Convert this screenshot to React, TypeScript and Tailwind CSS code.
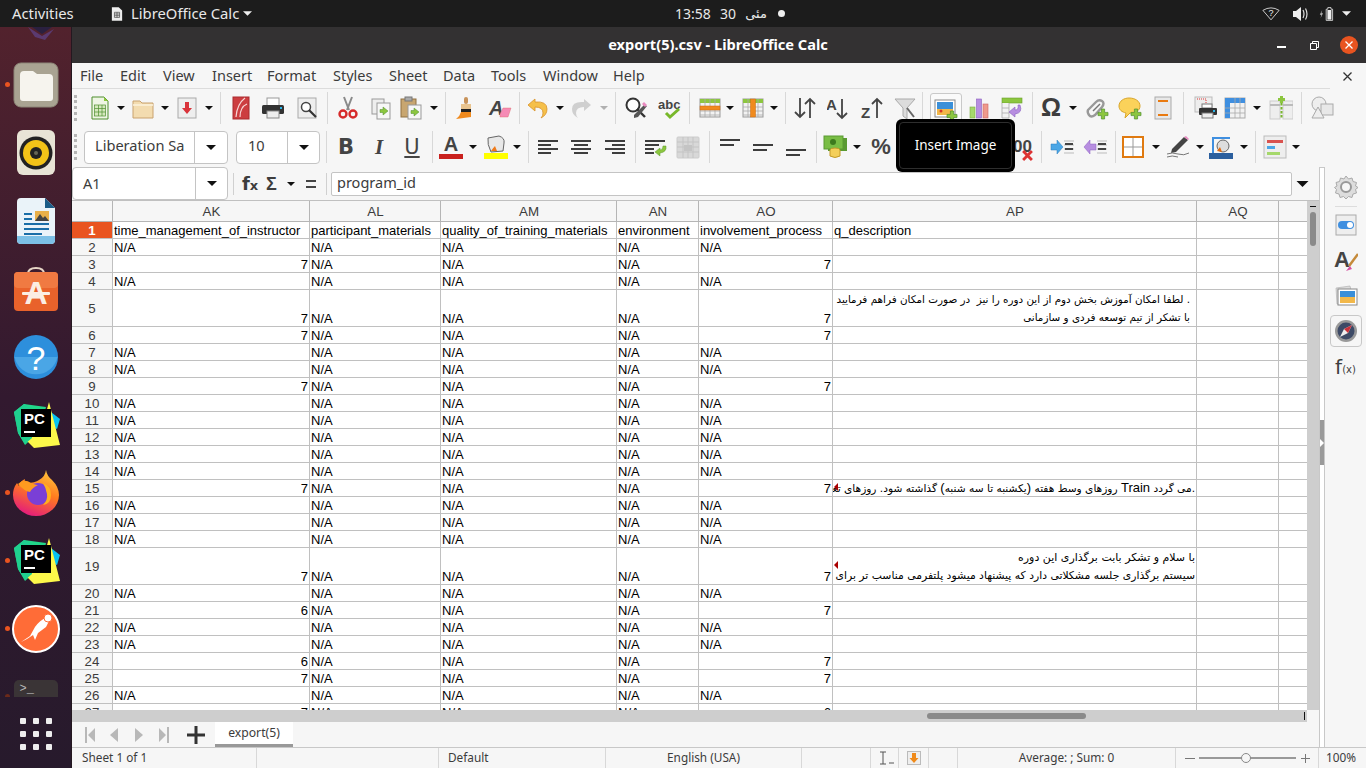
import type { ReactNode } from 'react';

const uiFont = "font-['Noto_Sans','Lato',sans-serif]";
const cellFont = "font-['Liberation_Sans',Arial,sans-serif]";

function G({ children, c = '' }: { children: ReactNode; c?: string }) {
  return (
    <svg viewBox="0 0 24 24" className={`w-6 h-6 shrink-0 block ${c}`}>
      {children}
    </svg>
  );
}

function Dd({ c = '', off = false }: { c?: string; off?: boolean }) {
  return (
    <svg viewBox="0 0 8 4" className={`w-2 h-1 shrink-0 block ${c}`}>
      <path d="M0 0h8L4 4z" fill={off ? '#b0b0b0' : '#111'} />
    </svg>
  );
}

function Sep({ c = '' }: { c?: string }) {
  return <div className={`w-px h-8 shrink-0 bg-[#d8d8d8] ${c}`} />;
}

function Grip() {
  return <div className="ml-[2px] w-[3px] h-[26px] shrink-0 border-l-[3px] border-dotted border-[#b5b5b5]" />;
}

const Plus = ({ x = 18, y = 18 }: { x?: number; y?: number }) => (
  <path d={`M${x - 1.6} ${y - 5}h3.2v3.4h3.4v3.2h-3.4v3.4h-3.2v-3.4h-3.4v-3.2h3.4z`} fill="#8cc63f" stroke="#4f8f2f" strokeWidth="0.7" />
);

const Table = ({ head = '#8cc63f' }: { head?: string }) => (
  <>
    <rect x="2" y="3" width="20" height="18" fill="#f2f2f2" stroke="#999" />
    <rect x="2" y="3" width="20" height="4" fill={head} />
    <path d="M2 11h20M2 15h20M2 19h20M7 3v18M12 3v18M17 3v18" stroke="#aaa" strokeWidth="0.8" fill="none" />
  </>
);

const HLines = ({ a = 3, rows }: { a?: number; rows: [number, number][] }) => (
  <>
    {rows.map(([x, w], i) => (
      <rect key={i} x={x} y={a + i * 4} width={w} height="2" fill="#3d3d3d" />
    ))}
  </>
);

function TopBar() {
  return (
    <div className={`h-[27px] shrink-0 bg-[#1c1c1c] flex items-center text-[#e8e8e8] text-[14.8px] ${uiFont}`}>
      <span className="ml-[12px] w-[99px] pb-[1px]">Activities</span>
      <svg viewBox="0 0 14 16" className="w-3 h-[14px] shrink-0">
        <path d="M1 0h8l4 4v12H1z" fill="#eee" />
        <path d="M4 6h6v6H4zM4 8h6M4 10h6M7 6v6" stroke="#444" strokeWidth="0.8" fill="none" />
      </svg>
      <span className="ml-[8px] w-[112px] whitespace-nowrap pb-[1px]">LibreOffice Calc</span>
      <Dd c="w-[9px] h-[5px] invert" />
      <div className="ml-[423px] w-[36px] text-[14px]">13:58</div>
      <span className="ml-[7px] w-[20px] text-center text-[14px]">30</span>
      <span className="ml-[7px] w-[22px] font-['DejaVu_Sans',sans-serif] text-[13px]" dir="rtl">مئی</span>
      <div className="ml-[11px] w-[7px] h-[7px] rounded-full bg-[#eee]" />
      <svg viewBox="0 0 20 16" className="ml-[477px] w-[18px] h-[15px] shrink-0">
        <path d="M1 4.500Q10-1 19 4.500L10 15z" fill="none" stroke="#ddd" strokeWidth="1" />
        <text x="10" y="11" fontSize="10" fill="#eee" textAnchor="middle" fontFamily="Liberation Sans">?</text>
      </svg>
      <svg viewBox="0 0 16 16" className="ml-[12px] w-[16px] h-[16px] shrink-0">
        <path d="M1 5h3l5-4v14l-5-4H1z" fill="#eee" />
        <path d="M11 4q2 4 0 8M13.500 2.500q3 5.500 0 11" stroke="#ddd" strokeWidth="1.200" fill="none" />
      </svg>
      <svg viewBox="0 0 20 16" className="ml-[11px] w-[16px] h-[16px] shrink-0">
        <path d="M4 3L1 9h2l-1 4 3-6H3z" fill="#bbb" />
        <path d="M9 2h2V0h4v2h2v14H9z" fill="none" stroke="#eee" strokeWidth="1" />
        <rect x="10.500" y="3" width="5" height="12" fill="#eee" />
      </svg>
      <Dd c="ml-[7px] w-[9px] h-[5px] invert" />
    </div>
  );
}

function DockSlot({ children, dot = false }: { children: ReactNode; dot?: boolean }) {
  return (
    <div className="relative h-[68px] w-full shrink-0 flex items-center justify-center">
      {dot && <div className="absolute left-[5px] top-[31px] w-[5px] h-[5px] rounded-full bg-[#e95420]" />}
      {children}
    </div>
  );
}

function PyCharm() {
  return (
    <svg viewBox="0 0 48 48" className="w-12 h-12 ml-[2px]">
      <path d="M34 8l13 10-3 10-10-4z" fill="#07c3f2" />
      <path d="M1 11L11 3l22 3-6 24-15 14-7-12z" fill="#21d789" />
      <path d="M36 1l11 43-26 3-8-8 18-20z" fill="#fcf84a" />
      <path d="M1 11L11 3l8 4v30l-7 6-7-11z" fill="#1fd08f" />
      <rect x="8" y="8" width="30" height="28" fill="#000" />
      <text x="11" y="23" fontSize="15" fontWeight="700" fill="#fff" fontFamily="Liberation Sans">PC</text>
      <rect x="11" y="30" width="11" height="2" fill="#fff" />
    </svg>
  );
}

function Dock() {
  return (
    <div className="w-[72px] shrink-0 flex flex-col bg-gradient-to-b from-[#52222d] via-[#32192f] to-[#271a2c] border-r border-[#241820]">
      <div className="h-[24px] shrink-0 overflow-hidden flex justify-center">
        <svg viewBox="0 0 44 14" className="w-[44px] h-[14px]">
          <path d="M14 0l14 9L40 2l-9 11-10-3z" fill="#5b3a70" />
          <path d="M18 0h20L28 7z" fill="#2a2040" />
        </svg>
      </div>
      <DockSlot dot>
        <svg viewBox="0 0 46 46" className="w-[46px] h-[46px]">
          <rect x="1" y="1" width="44" height="44" rx="7" fill="#a9a392" stroke="#8d8778" />
          <path d="M7 13q0-4 4-4h9l4 3h12q4 0 4 4v20q0 3-3 3H10q-3 0-3-3z" fill="#f6f4ee" />
        </svg>
      </DockSlot>
      <DockSlot>
        <svg viewBox="0 0 38 46" className="w-[38px] h-[46px]">
          <rect x="0" y="0" width="38" height="45" rx="6" fill="#e8e4d6" />
          <circle cx="19" cy="23" r="16.500" fill="#222" />
          <circle cx="19" cy="23" r="13" fill="#f2c318" />
          <circle cx="19" cy="23" r="6" fill="#222" />
          <circle cx="19" cy="23" r="2" fill="#665" />
        </svg>
      </DockSlot>
      <DockSlot>
        <svg viewBox="0 0 38 46" className="w-[38px] h-[46px]">
          <path d="M4 0h24l10 10v32q0 4-4 4H4q-4 0-4-4V4q0-4 4-4z" fill="#eaf3f9" />
          <path d="M0 38h38v4q0 4-4 4H4q-4 0-4-4z" fill="#7cc0e6" />
          <path d="M28 0l10 10h-10z" fill="#1a5c88" />
          <path d="M7 15h8v2H7zM7 20h8v2H7zM7 25h25v2H7zM7 30h25v2H7zM7 35h18v2H7z" fill="#1a6ea8" />
          <rect x="18" y="13" width="14" height="10" fill="#e8b04a" />
          <path d="M18 23l5-7 3 4 2-2 4 5z" fill="#444" />
        </svg>
      </DockSlot>
      <DockSlot>
        <svg viewBox="0 0 46 46" className="w-[46px] h-[46px]">
          <path d="M15 8q0-6 8-6t8 6" fill="none" stroke="#e6d6c6" strokeWidth="2" />
          <rect x="1" y="6" width="44" height="39" rx="4" fill="#e9622b" />
          <rect x="1" y="6" width="44" height="16" rx="4" fill="#f07a42" />
          <text x="23" y="38" fontSize="32" fontWeight="700" fill="#fbeee4" textAnchor="middle" fontFamily="Liberation Sans">A</text>
          <rect x="9" y="26" width="28" height="3" rx="1" fill="#fbeee4" />
        </svg>
      </DockSlot>
      <DockSlot>
        <svg viewBox="0 0 46 46" className="w-[46px] h-[46px]">
          <circle cx="23" cy="23" r="22" fill="#2d8fdc" />
          <path d="M1.500 23h43a22 22 0 0 1-43 0z" fill="#4aa6e6" />
          <text x="23" y="36" fontSize="34" fill="#fff" textAnchor="middle" fontFamily="Liberation Sans">?</text>
        </svg>
      </DockSlot>
      <DockSlot><PyCharm /></DockSlot>
      <DockSlot dot>
        <svg viewBox="0 0 46 46" className="w-[46px] h-[46px]">
          <defs>
            <linearGradient id="ff" x1="0.7" y1="0" x2="0.3" y2="1">
              <stop offset="0" stopColor="#ffc23a" />
              <stop offset="0.45" stopColor="#ff7a1f" />
              <stop offset="1" stopColor="#e3187f" />
            </linearGradient>
          </defs>
          <path d="M33 0q1 6 6 10 7 7 7 15a23 21 0 0 1-46 0q0-7 4-12l2 3q1-5 6-7-1 3 2 4 8 0 12-3 6-3 7-10z" fill="url(#ff)" />
          <circle cx="25" cy="24" r="11" fill="#7a3fd6" />
          <path d="M5 14q6-6 13-1 5 2 7 2-6 3-8 7-6-1-12-8z" fill="#ff9a1f" />
          <path d="M30 13q8 3 8 12t-8 10q5-5 4-11t-4-11z" fill="#ffb01f" />
        </svg>
      </DockSlot>
      <DockSlot dot><PyCharm /></DockSlot>
      <DockSlot dot>
        <svg viewBox="0 0 48 48" className="w-12 h-12">
          <circle cx="24" cy="24" r="23" fill="#ff6c37" stroke="#fff" strokeWidth="2" />
          <path d="M9 37l9-6 5-9q5-7 11-9l3 3-3 6-8 6-3 7-2-5-6 4z" fill="#fff" />
          <circle cx="36" cy="13" r="4" fill="#fff" stroke="#ff6c37" />
        </svg>
      </DockSlot>
      <div className="relative h-[34px] shrink-0 overflow-hidden flex justify-center items-start">
        <div className="mt-[17px] w-[44px] h-[44px] rounded-[5px] bg-[#3a3436] text-[#b8b8b8] text-[12px] pl-[6px] font-['Liberation_Mono',monospace]">&gt;_</div>
        <div className="absolute left-[5px] top-[31px] w-[5px] h-[5px] rounded-full bg-[#6b2a1a]" />
      </div>
      <div className="mt-[21px] grid grid-cols-3 gap-[7px] w-[32px] mx-auto">
        {Array.from({ length: 9 }).map((_, i) => (
          <div key={i} className="w-[6px] h-[6px] rounded-[1px] bg-[#eee]" />
        ))}
      </div>
    </div>
  );
}

function TitleBar() {
  return (
    <div className={`relative h-[36px] shrink-0 bg-[#333132] flex items-center justify-center text-white text-[14.6px] font-bold ${uiFont}`}>
      <span className="mr-[2px] pb-[1px]">export(5).csv - LibreOffice Calc</span>
      <div className="absolute right-[8px] top-0 h-full flex items-center">
        <div className="w-[9px] h-[2px] bg-white mt-[3px]" />
        <svg viewBox="0 0 9 9" className="ml-[24px] w-[9px] h-[9px]">
          <path d="M0.500 2.500h6v6h-6zM2.500 2V0.500h6v6H7" fill="none" stroke="#fff" />
        </svg>
        <div className="ml-[21px] w-[18px] h-[18px] rounded-full bg-[#e95420] flex items-center justify-center">
          <svg viewBox="0 0 8 8" className="w-2 h-2">
            <path d="M0.500 0.500l7 7M7.500 0.500l-7 7" stroke="#fff" strokeWidth="1.300" />
          </svg>
        </div>
      </div>
    </div>
  );
}

function MenuBar() {
  return (
    <div className={`relative h-[25px] shrink-0 bg-[#f6f6f6] flex items-center pl-2 text-[#3c3c3c] text-[14.5px] ${uiFont}`}>
      <span className="w-[40px]">File</span>
      <span className="w-[43px]">Edit</span>
      <span className="w-[49px]">View</span>
      <span className="w-[55px]">Insert</span>
      <span className="w-[66px]">Format</span>
      <span className="w-[56px]">Styles</span>
      <span className="w-[54px]">Sheet</span>
      <span className="w-[48px]">Data</span>
      <span className="w-[52px]">Tools</span>
      <span className="w-[70px]">Window</span>
      <span>Help</span>
      <svg viewBox="0 0 9 9" className="absolute right-[14px] top-[9px] w-[9px] h-[9px]">
        <path d="M0.500 0.500l8 8M8.500 0.500l-8 8" stroke="#333" strokeWidth="1.300" />
      </svg>
    </div>
  );
}

function Toolbar1() {
  return (
    <div className="h-[39px] shrink-0 bg-[#f6f6f6] flex items-center">
      <Grip />
      <G c="ml-[11px]">
        <path d="M4 1h12l4 4v18H4z" fill="#eef5e4" stroke="#4f8f2f" />
        <path d="M16 1v4h4z" fill="#8cc63f" />
        <rect x="6.500" y="9" width="11" height="11" fill="#d5e8bd" stroke="#4f8f2f" strokeWidth="0.7" />
        <path d="M6.500 12.500h11M6.500 16h11M10.500 9v11M14 9v11" stroke="#4f8f2f" strokeWidth="0.7" />
      </G>
      <Dd c="ml-[5px]" />
      <G c="ml-[6px]">
        <path d="M2 5h7l2 2h11v15H2z" fill="#f3dcb0" stroke="#c9a26f" />
        <path d="M2 9h20" stroke="#fdf3dc" strokeWidth="1.500" />
      </G>
      <Dd c="ml-[6px]" />
      <G c="ml-[6px]">
        <rect x="3" y="2" width="18" height="20" fill="#eee" stroke="#aaa" />
        <path d="M10 6h4v6h3l-5 6-5-6h3z" fill="#d9333a" />
      </G>
      <Dd c="ml-[6px]" />
      <Sep c="ml-[7px]" />
      <G c="ml-[8px]">
        <rect x="4" y="1" width="16" height="22" fill="#cc3d40" stroke="#aa2a2e" />
        <path d="M16 2Q8 8 7 21M18 8Q11 11 11 21" stroke="#f7d6d6" strokeWidth="1.200" fill="none" />
      </G>
      <G c="ml-[8px]">
        <rect x="6" y="2" width="12" height="8" fill="#fff" stroke="#999" />
        <rect x="1" y="9" width="22" height="9" rx="1.500" fill="#333" />
        <rect x="19" y="11" width="2" height="2" fill="#2ab4e8" />
        <rect x="6" y="15" width="12" height="7" fill="#eee" stroke="#888" />
      </G>
      <G c="ml-[10px]">
        <rect x="3" y="2" width="18" height="20" fill="#eee" stroke="#aaa" />
        <circle cx="11" cy="11" r="4.500" fill="#fff" stroke="#444" strokeWidth="1.500" />
        <path d="M14 14l7 7" stroke="#333" strokeWidth="2.200" />
      </G>
      <Sep c="ml-[8px]" />
      <G c="ml-[8px]">
        <path d="M8 1l5 13M16 1l-5 13" stroke="#8a8a8a" strokeWidth="2" />
        <circle cx="7" cy="18" r="3.500" fill="none" stroke="#d62a2a" strokeWidth="2.400" />
        <circle cx="17" cy="18" r="3.500" fill="none" stroke="#d62a2a" strokeWidth="2.400" />
      </G>
      <G c="ml-[9px]">
        <rect x="3" y="3" width="12" height="15" fill="#eee" stroke="#999" />
        <rect x="8" y="7" width="13" height="16" fill="#f7f7f7" stroke="#999" />
        <path d="M19 15l-5-4v2.500h-3v3h3V19z" fill="#8cc63f" stroke="#4f8f2f" strokeWidth="0.500" />
      </G>
      <G c="ml-[6px]">
        <rect x="2" y="3" width="15" height="18" fill="#c8a670" stroke="#8f7143" />
        <rect x="6" y="1" width="7" height="4" fill="#aaa" stroke="#777" />
        <rect x="9" y="9" width="13" height="14" fill="#f7f7f7" stroke="#999" />
        <path d="M20 16l-5-4v2.500h-3v3h3V20z" fill="#8cc63f" stroke="#4f8f2f" strokeWidth="0.500" />
      </G>
      <Dd c="ml-[7px]" />
      <Sep c="ml-[7px]" />
      <G c="ml-[8px]">
        <rect x="10" y="1" width="4" height="7" rx="2" fill="#c8935a" />
        <rect x="7" y="8" width="10" height="6" fill="#e9c48f" />
        <rect x="7" y="13" width="10" height="3" fill="#222" />
        <path d="M7 16h10v5l-15 2q4-3 5-7z" fill="#f08a1d" />
      </G>
      <G c="ml-[10px]">
        <text x="1" y="19" fontSize="20" fontWeight="700" fontStyle="italic" fill="#444" fontFamily="Liberation Sans">A</text>
        <path d="M12 18l3-6h8l-3 9h-8z" fill="#f58bb5" stroke="#d66" strokeWidth="0.400" />
      </G>
      <Sep c="ml-[7px]" />
      <G c="ml-[5px]">
        <path d="M10 3L3 9l7 6v-4q8 0 8 6 0 3-2 5 6-3 6-9 0-8-12-7z" fill="#f5c04a" stroke="#d8922a" strokeWidth="0.800" />
      </G>
      <Dd c="ml-[7px]" />
      <G c="ml-[6px]">
        <path d="M14 3l7 6-7 6v-4q-8 0-8 6 0 3 2 5-6-3-6-9 0-8 12-7z" fill="#cfcfcf" />
      </G>
      <Dd c="ml-[6px]" off />
      <Sep c="ml-[7px]" />
      <G c="ml-[8px]">
        <circle cx="9" cy="9" r="6.500" fill="#fff" stroke="#333" strokeWidth="2" />
        <path d="M13 13l8 8" stroke="#333" strokeWidth="2.400" />
        <path d="M10 19l10-10 3 1-9 11-4 1z" fill="#555" />
        <path d="M20 6l3 3-2 2-3-3z" fill="#e98ac0" />
      </G>
      <G c="ml-[10px]">
        <text x="0" y="13" fontSize="13" fontWeight="700" fill="#444" fontFamily="Liberation Sans">abc</text>
        <path d="M8 17l4 4 9-8" stroke="#78b82a" strokeWidth="3" fill="none" />
      </G>
      <Sep c="ml-[7px]" />
      <G c="ml-[8px]">
        <Table />
        <rect x="2" y="10" width="20" height="4" fill="#f08a1d" stroke="#c96a10" strokeWidth="0.500" />
      </G>
      <Dd c="ml-[4px]" />
      <G c="ml-[7px]">
        <Table />
        <rect x="9.500" y="3" width="5" height="18" fill="#f08a1d" stroke="#c96a10" strokeWidth="0.500" />
      </G>
      <Dd c="ml-[5px]" />
      <Sep c="ml-[7px]" />
      <G c="ml-[7px]">
        <path d="M7 2v19M2 16l5 5 5-5M17 22V3M12 8l5-5 5 5" stroke="#444" strokeWidth="1.800" fill="none" />
      </G>
      <G c="ml-[10px]">
        <text x="-1" y="14" fontSize="15" fontWeight="700" fill="#444" fontFamily="Liberation Sans">A</text>
        <path d="M15 3v19M10 17l5 5 5-5" stroke="#444" strokeWidth="1.800" fill="none" />
      </G>
      <G c="ml-[10px]">
        <text x="0" y="22" fontSize="15" fontWeight="700" fill="#444" fontFamily="Liberation Sans">Z</text>
        <path d="M16 22V3M11 8l5-5 5 5" stroke="#444" strokeWidth="1.800" fill="none" />
      </G>
      <G c="ml-[8px]">
        <path d="M2 3h20l-8 9v11l-4-3v-8z" fill="#dcdcdc" stroke="#aaa" />
        <path d="M14 12l7 9" stroke="#666" strokeWidth="2" />
      </G>
      <Sep c="ml-[5px]" />
      <div className="ml-[7px] w-[32px] h-[33px] shrink-0 mt-[3px] rounded-[3px] border border-[#c9c9c9] bg-[#fafafa] flex items-start justify-center pt-[3px]">
        <G>
          <rect x="1" y="3" width="20" height="17" fill="#fff" stroke="#888" />
          <rect x="3" y="5" width="16" height="7" fill="#3a8fd8" />
          <rect x="3" y="12" width="16" height="6" fill="#f2b84a" />
          <circle cx="7" cy="14" r="1.500" fill="#d8362a" />
          <Plus x={18} y={19} />
        </G>
      </div>
      <G c="ml-[5px]">
        <rect x="3" y="11" width="5" height="11" fill="#a5d86b" stroke="#7cae3f" strokeWidth="0.600" />
        <rect x="9.500" y="3" width="5" height="19" fill="#b78ee0" stroke="#8a5fc0" strokeWidth="0.600" />
        <rect x="16" y="8" width="5" height="14" fill="#ee9a8c" stroke="#c66" strokeWidth="0.600" />
      </G>
      <G c="ml-[9px]">
        <rect x="2" y="2" width="20" height="5" fill="#8cc63f" stroke="#6a9f2b" strokeWidth="0.600" />
        <path d="M2 7v15h7V7M2 12h7M2 17h7" stroke="#aaa" fill="#f2f2f2" strokeWidth="0.800" />
        <path d="M20 9q3 8-5 9v3l-6-5 6-5v3q4 0 3-5z" fill="#b78ee0" stroke="#8a5fc0" strokeWidth="0.600" />
      </G>
      <Sep c="ml-[8px]" />
      <div className="ml-[6px] w-6 h-6 shrink-0 flex items-center justify-center text-[25px] leading-none font-bold text-[#3d3d3d] font-['Liberation_Sans',sans-serif]">Ω</div>
      <Dd c="ml-[6px]" />
      <G c="ml-[8px]">
        <path d="M3 14l8-8q3-3 6-1t0 6l-7 8q-4 3-6 0t-1-5z" fill="none" stroke="#999" strokeWidth="2.400" />
        <path d="M8 15l7-7" stroke="#777" strokeWidth="1.500" />
        <Plus x={18} y={18} />
      </G>
      <G c="ml-[9px]">
        <path d="M11 2c6 0 11 3 11 8s-5 7-10 7l-5 5 1-5c-4-1-7-3-7-7 0-5 5-8 10-8z" fill="#fbd25a" stroke="#d8a52a" />
        <Plus x={18} y={18} />
      </G>
      <G c="ml-[9px]">
        <rect x="4" y="1" width="16" height="22" fill="#e8e8e8" stroke="#aaa" />
        <path d="M7 5h10M7 19h10" stroke="#e97a10" strokeWidth="1.800" />
      </G>
      <Sep c="ml-[8px]" />
      <G c="ml-[10px]">
        <rect x="1" y="1" width="17" height="15" fill="#eee" stroke="#bbb" />
        <path d="M3 3h9v9" stroke="#d33" strokeDasharray="1 1" fill="none" />
        <rect x="8" y="8" width="10" height="4" fill="#fff" stroke="#777" />
        <rect x="5" y="12" width="18" height="7" rx="1" fill="#333" />
        <rect x="19" y="14" width="2" height="2" fill="#2ab4e8" />
        <rect x="8" y="17" width="11" height="5" fill="#eee" stroke="#777" />
      </G>
      <G c="ml-[5px]">
        <rect x="2" y="2" width="20" height="20" fill="#f2f2f2" stroke="#aaa" />
        <rect x="2" y="2" width="20" height="5" fill="#3f8fe0" />
        <rect x="2" y="2" width="5" height="20" fill="#3f8fe0" />
        <path d="M2 12h20M2 17h20M12 2v20M17 2v20" stroke="#aaa" strokeWidth="0.800" />
      </G>
      <Dd c="ml-[6px]" />
      <G c="ml-[8px]">
        <rect x="1" y="5" width="10" height="18" fill="#eee" stroke="#ccc" />
        <rect x="14" y="5" width="10" height="18" fill="#eee" stroke="#ccc" />
        <path d="M1 9h10M14 9h10" stroke="#bbb" strokeWidth="2" />
        <path d="M12.500 7v16" stroke="#79b52e" strokeWidth="2" strokeDasharray="2.500 1.500" />
        <path d="M11 0h3v2h2v3h-2v2h-3V5H9V2h2z" fill="#8cc63f" />
      </G>
      <Sep c="ml-[8px]" />
      <G c="ml-[8px]">
        <circle cx="9" cy="8" r="7" fill="#eee" stroke="#aaa" />
        <rect x="11" y="8" width="12" height="11" fill="#e8e8e8" stroke="#aaa" />
        <path d="M8 11l6 11H2z" fill="#eee" stroke="#aaa" />
      </G>
    </div>
  );
}

function Toolbar2() {
  return (
    <div className="h-[40px] shrink-0 bg-[#f6f6f6] flex items-center">
      <Grip />
      <div className={`ml-[7px] w-[144px] h-[33px] shrink-0 rounded-[4px] border border-[#c4c4c4] bg-white flex items-center ${uiFont}`}>
        <span className="pl-[10px] w-[109px] pb-[2px] text-[14.6px] text-[#3c3c3c] overflow-hidden whitespace-nowrap">Liberation Sa</span>
        <div className="h-full border-l border-[#c4c4c4] flex-1 flex items-center justify-center">
          <Dd c="w-[10px] h-[5px]" />
        </div>
      </div>
      <div className={`ml-[8px] w-[84px] h-[33px] shrink-0 rounded-[4px] border border-[#c4c4c4] bg-white flex items-center ${uiFont}`}>
        <span className="pl-[11px] w-[50px] pb-[2px] text-[14.6px] text-[#3c3c3c]">10</span>
        <div className="h-full border-l border-[#c4c4c4] flex-1 flex items-center justify-center">
          <Dd c="w-[10px] h-[5px]" />
        </div>
      </div>
      <Sep c="ml-[6px]" />
      <div className="ml-[7px] w-6 text-center text-[21px] font-bold text-[#444] font-['DejaVu_Sans',sans-serif] leading-none">B</div>
      <div className="ml-[9px] w-6 text-center text-[21px] italic font-bold text-[#444] font-['Liberation_Serif',serif] leading-none">I</div>
      <div className="ml-[9px] w-6 text-center text-[21px] text-[#444] font-['DejaVu_Sans',sans-serif] leading-none underline underline-offset-2 decoration-2">U</div>
      <Sep c="ml-[8px]" />
      <div className="ml-[6px] w-6 h-6 shrink-0 flex flex-col items-center">
        <span className="text-[20px] font-bold leading-[18px] text-[#444] font-['Liberation_Sans',sans-serif]">A</span>
        <div className="w-[24px] h-[6px] mt-[1px] bg-[#c9211e]" />
      </div>
      <Dd c="ml-[6px]" />
      <G c="ml-[7px]">
        <path d="M4 3l11-2q6 2 5 7l-1 8-12 1q-4-8-3-14z" fill="#e8e8e8" stroke="#666" />
        <path d="M7 16q2-3 4-5l2 5z" fill="#ef7a1a" />
        <rect x="0" y="18" width="24" height="6" fill="#ffff00" />
      </G>
      <Dd c="ml-[5px]" />
      <Sep c="ml-[7px]" />
      <G c="ml-[7px]"><HLines a={5} rows={[[2, 20], [2, 13], [2, 20], [2, 13]]} /></G>
      <G c="ml-[9px]"><HLines a={5} rows={[[2, 20], [5, 14], [2, 20], [5, 14]]} /></G>
      <G c="ml-[10px]"><HLines a={5} rows={[[2, 20], [9, 13], [2, 20], [9, 13]]} /></G>
      <Sep c="ml-[8px]" />
      <G c="ml-[8px]">
        <HLines a={5} rows={[[1, 20], [1, 14], [1, 9], [1, 9]]} />
        <path d="M22 11q1 6-6 7v3l-5-4 5-4v2q3 0 3-4z" fill="#8cc63f" stroke="#5b9a2a" strokeWidth="0.500" />
      </G>
      <G c="ml-[8px]">
        <rect x="1" y="2" width="22" height="21" rx="1" fill="#d8d8d8" stroke="#ccc" />
        <path d="M1 7h22M1 12h22M1 17h22M7 2v21M12 2v21M17 2v21" stroke="#c4c4c4" />
        <rect x="8" y="10" width="8" height="6" fill="#c4c4c4" />
      </G>
      <Sep c="ml-[9px]" />
      <G c="ml-[8px]"><rect x="2" y="4" width="20" height="2" fill="#3d3d3d" /><rect x="2" y="9" width="14" height="2" fill="#3d3d3d" /></G>
      <G c="ml-[9px]"><rect x="2" y="9" width="20" height="2" fill="#3d3d3d" /><rect x="2" y="14" width="14" height="2" fill="#3d3d3d" /></G>
      <G c="ml-[9px]"><rect x="2" y="14" width="20" height="2" fill="#3d3d3d" /><rect x="2" y="19" width="14" height="2" fill="#3d3d3d" /></G>
      <Sep c="ml-[8px]" />
      <G c="ml-[6px]">
        <rect x="5" y="3" width="19" height="13" fill="#5a9a32" />
        <rect x="1" y="1" width="19" height="13" fill="#79bd45" stroke="#5a9a32" />
        <circle cx="10" cy="7" r="3" fill="#3d7a1e" />
        <ellipse cx="12" cy="15" rx="5" ry="2" fill="#f4cf5a" stroke="#c29a2a" />
        <path d="M7 15v6q5 3 10 0v-6" fill="#f4cf5a" stroke="#c29a2a" />
      </G>
      <Dd c="ml-[6px]" />
      <div className="ml-[8px] w-6 text-center text-[22px] font-bold text-[#444] font-['Liberation_Sans',sans-serif] leading-none">%</div>
      <div className="relative ml-[115px] w-6 h-6 shrink-0 text-[17px] leading-6 text-[#444] font-bold font-['Liberation_Sans',sans-serif]">
        <span className="absolute right-0 top-0 whitespace-nowrap">0.00</span>
        <svg viewBox="0 0 10 10" className="absolute right-[-1px] bottom-[-2px] w-[11px] h-[11px]">
          <path d="M1 1l8 8M9 1l-8 8" stroke="#d33" strokeWidth="2.600" />
        </svg>
      </div>
      <Sep c="ml-[9px]" />
      <G c="ml-[8px]">
        <path d="M14 6h10M14 10h10M14 14h10M14 18h10" stroke="#bbb" />
        <path d="M15 9h8M15 14h8" stroke="#444" strokeWidth="2" />
        <path d="M1 9h6V5l6 7-6 7v-4H1z" fill="#4aa6e6" stroke="#2a7ab8" strokeWidth="0.500" />
      </G>
      <G c="ml-[9px]">
        <path d="M14 6h10M14 10h10M14 14h10M14 18h10" stroke="#bbb" />
        <path d="M15 9h8M15 14h8" stroke="#444" strokeWidth="2" />
        <path d="M13 9H7V5l-6 7 6 7v-4h6z" fill="#b78ee0" stroke="#8a5fc0" strokeWidth="0.500" />
      </G>
      <Sep c="ml-[8px]" />
      <G c="ml-[5px]">
        <rect x="2" y="2" width="20" height="20" fill="#fff" stroke="#e07a10" strokeWidth="2" />
        <path d="M12 3v18M3 12h18" stroke="#999" />
      </G>
      <Dd c="ml-[7px]" />
      <G c="ml-[6px]">
        <path d="M6 14L18 2l4 3-12 12-5 1z" fill="#444" />
        <path d="M18 2l2-1 3 3-1 1z" fill="#e98ac0" />
        <path d="M1 19q5-2 11 0t11-1M1 22q5-2 11 0" stroke="#777" fill="none" />
      </G>
      <Dd c="ml-[6px]" />
      <G c="ml-[5px]">
        <path d="M3 2h18v2H5v14H3z" fill="#3f8fe0" />
        <circle cx="14" cy="11" r="6" fill="#ddd" stroke="#666" />
        <path d="M8 16l3-4 2 5z" fill="#e06a10" />
        <rect x="0" y="18" width="24" height="6" fill="#2b5f9e" />
      </G>
      <Dd c="ml-[7px]" />
      <Sep c="ml-[7px]" />
      <G c="ml-[7px]">
        <rect x="1" y="1" width="22" height="22" fill="#eee" stroke="#bbb" />
        <rect x="4" y="5" width="16" height="3" fill="#d9534f" />
        <rect x="4" y="11" width="8" height="3" fill="#4aa6e6" />
        <rect x="4" y="17" width="13" height="3" fill="#a5d86b" />
      </G>
      <Dd c="ml-[5px]" />
    </div>
  );
}

function FormulaBar() {
  return (
    <div className={`h-[33px] shrink-0 bg-[#f6f6f6] flex items-center text-[#3c3c3c] text-[14.5px] ${uiFont}`}>
      <div className="w-[156px] h-[33px] shrink-0 rounded-[4px] border border-[#c4c4c4] bg-white flex items-center">
        <span className="pl-[10px] w-[122px]">A1</span>
        <div className="h-full border-l border-[#c4c4c4] flex-1 flex items-center justify-center">
          <Dd c="w-[10px] h-[5px]" />
        </div>
      </div>
      <div className="ml-[5px] w-px h-[22px] bg-[#d0d0d0]" />
      <span className="ml-[8px] w-[20px] text-[18px] leading-none font-bold text-[#3d3d3d] font-['DejaVu_Sans',sans-serif]">f<span className="text-[13px]">x</span></span>
      <span className="ml-[4px] w-[14px] text-[18px] leading-none font-bold text-[#3d3d3d] font-['Liberation_Sans',sans-serif]">Σ</span>
      <Dd c="ml-[7px]" />
      <div className="ml-[11px] w-[10px] h-[8px] border-y-2 border-[#444] shrink-0" />
      <div className="ml-[10px] w-px h-[22px] bg-[#d0d0d0]" />
      <div className="ml-[4px] mt-[1px] w-[961px] h-[24px] shrink-0 border border-[#c4c4c4] rounded-[2px] bg-white flex items-center pl-[5px] pb-[2px]">program_id</div>
      <Dd c="ml-[4px] w-[13px] h-[6px]" />
    </div>
  );
}

type Row = {
  n: number;
  kind: 'na' | 'num' | 'head';
  ak?: string;
  ao?: string;
  tall?: boolean;
  text?: ReactNode[];
  textClass?: string;
  mark?: boolean;
};

const Lat = ({ children }: { children: ReactNode }) => (
  <span className="text-[13px] font-['Liberation_Sans',sans-serif]">{children}</span>
);

const rows: Row[] = [
  { n: 1, kind: 'head' },
  { n: 2, kind: 'na' },
  { n: 3, kind: 'num', ak: '7', ao: '7' },
  { n: 4, kind: 'na' },
  {
    n: 5,
    kind: 'num',
    ak: '7',
    ao: '7',
    tall: true,
    textClass: 'pr-[6px] text-[10.4px]',
    text: ['. لطفا امکان آموزش بخش دوم از این دوره را نیز  در صورت امکان فراهم فرمایید', 'با تشکر از تیم توسعه فردی و سازمانی'],
  },
  { n: 6, kind: 'num', ak: '7', ao: '7' },
  { n: 7, kind: 'na' },
  { n: 8, kind: 'na' },
  { n: 9, kind: 'num', ak: '7', ao: '7' },
  { n: 10, kind: 'na' },
  { n: 11, kind: 'na' },
  { n: 12, kind: 'na' },
  { n: 13, kind: 'na' },
  { n: 14, kind: 'na' },
  {
    n: 15,
    kind: 'num',
    ak: '7',
    ao: '7',
    mark: true,
    textClass: 'pr-[1px] text-[10.6px]',
    text: [
      <>.می گردد <Lat>Train</Lat> روزهای وسط هفته <Lat>(</Lat>یکشنبه تا سه شنبه<Lat>)</Lat> گذاشته شود. روزهای تعطیل</>,
    ],
  },
  { n: 16, kind: 'na' },
  { n: 17, kind: 'na' },
  { n: 18, kind: 'na' },
  {
    n: 19,
    kind: 'num',
    ak: '7',
    ao: '7',
    tall: true,
    mark: true,
    textClass: 'pr-[1px] pt-[2px] text-[11px]',
    text: ['با سلام و تشکر بابت برگذاری این دوره', <span className="text-[10.8px]">سیستم برگذاری جلسه مشکلاتی دارد که پیشنهاد میشود پلتفرمی مناسب تر برای</span>],
  },
  { n: 20, kind: 'na' },
  { n: 21, kind: 'num', ak: '6', ao: '7' },
  { n: 22, kind: 'na' },
  { n: 23, kind: 'na' },
  { n: 24, kind: 'num', ak: '6', ao: '7' },
  { n: 25, kind: 'num', ak: '7', ao: '7' },
  { n: 26, kind: 'na' },
  { n: 27, kind: 'num', ak: '7', ao: '6' },
];

const line = 'border-r border-b border-[#c0c0c0]';
const cell = `${line} shrink-0 h-full flex items-end px-[1px] leading-[14px] overflow-hidden whitespace-nowrap`;

function SheetRow({ r }: { r: Row }) {
  const head = r.kind === 'head';
  const isNa = r.kind === 'na';
  return (
    <div className={`flex shrink-0 ${r.tall ? 'h-[37px]' : 'h-[17px]'}`}>
      <div className={`w-[41px] shrink-0 border-r border-b border-[#c0c0c0] flex items-center justify-center leading-none pt-[2px] text-[13.33px] ${head ? 'bg-[#e95420] text-white font-bold' : 'bg-[#f6f6f6] text-[#3c3c3c]'}`}>
        {r.n}
      </div>
      <div className={`${cell} w-[197px] ${r.ak ? 'justify-end' : ''}`}>
        {head ? 'time_management_of_instructor' : isNa ? 'N/A' : r.ak}
      </div>
      <div className={`${cell} w-[131px]`}>{head ? 'participant_materials' : 'N/A'}</div>
      <div className={`${cell} w-[176px]`}>{head ? 'quality_of_training_materials' : 'N/A'}</div>
      <div className={`${cell} w-[82px]`}>{head ? 'environment' : 'N/A'}</div>
      <div className={`${cell} w-[134px] ${r.ao ? 'justify-end' : ''}`}>
        {head ? 'involvement_process' : isNa ? 'N/A' : r.ao}
      </div>
      <div className={`relative ${line} shrink-0 h-full w-[364px] overflow-hidden`}>
        {head && <div className="px-[1px] pt-[2px] leading-[14px]">q_description</div>}
        {r.text && (
          <div className={`flex flex-col h-full justify-center items-start whitespace-pre font-['DejaVu_Sans','Liberation_Sans',sans-serif] ${r.textClass}`} dir="rtl">
            {r.text.map((t, i) => (
              <div key={i} className={r.tall ? 'leading-[18.5px]' : 'leading-[16px]'}>{t}</div>
            ))}
          </div>
        )}
        {r.mark && (
          <div className={`absolute left-[1px] w-0 h-0 border-y-[4px] border-y-transparent border-r-[4px] border-r-[#a00] ${r.tall ? 'top-[13px]' : 'top-[3px]'}`} />
        )}
      </div>
      <div className={`${cell} w-[82px]`} />
      <div className="flex-1 border-b border-[#c0c0c0]" />
    </div>
  );
}

function Sheet() {
  const headCell = 'shrink-0 h-full border-r border-b border-[#b5b5b5] flex items-center justify-center pl-[1px] pt-[1px]';
  return (
    <div className="flex flex-1 min-h-0">
      <div className={`flex-1 min-w-0 flex flex-col overflow-hidden bg-white text-[13px] text-black border-t border-[#c0c0c0] ${cellFont}`}>
        <div className="h-[21px] shrink-0 flex bg-[#f6f6f6] text-[#3c3c3c] text-[13.33px]">
          <div className={`${headCell} w-[41px]`} />
          <div className={`${headCell} w-[197px]`}>AK</div>
          <div className={`${headCell} w-[131px]`}>AL</div>
          <div className={`${headCell} w-[176px]`}>AM</div>
          <div className={`${headCell} w-[82px]`}>AN</div>
          <div className={`${headCell} w-[134px]`}>AO</div>
          <div className={`${headCell} w-[364px]`}>AP</div>
          <div className={`${headCell} w-[82px]`}>AQ</div>
          <div className="flex-1 border-b border-[#b5b5b5]" />
        </div>
        {rows.map(r => (
          <SheetRow key={r.n} r={r} />
        ))}
      </div>
      <div className="w-[12px] shrink-0 bg-[#cecece] flex flex-col items-center border-t border-[#c0c0c0]">
        <div className="mt-[5px] w-[6px] h-[1px] bg-[#111]" />
        <div className="mt-[5px] w-[6px] h-[34px] rounded-full bg-[#8a8a8a]" />
      </div>
    </div>
  );
}

function HScroll() {
  return (
    <div className="h-[12px] shrink-0 flex">
      <div className="w-[1235px] bg-[#cecece] flex items-center">
        <div className="ml-[855px] w-[159px] h-[6px] rounded-full bg-[#8a8a8a]" />
        <div className="ml-[218px] w-[1px] h-[8px] bg-[#111]" />
      </div>
    </div>
  );
}

function TabBar() {
  return (
    <div className={`h-[25px] shrink-0 bg-[#f6f6f6] flex items-center text-[#3c3c3c] text-[12.2px] ${uiFont}`}>
      <svg viewBox="0 0 10 16" className="ml-[13px] w-[10px] h-[16px]"><path d="M0 0h2v16H0zM10 1v14L3 8z" fill="#b8b8b8" /></svg>
      <svg viewBox="0 0 8 16" className="ml-[15px] w-2 h-4"><path d="M8 1v14L0 8z" fill="#b8b8b8" /></svg>
      <svg viewBox="0 0 8 16" className="ml-[17px] w-2 h-4"><path d="M0 1v14l8-7z" fill="#b8b8b8" /></svg>
      <svg viewBox="0 0 10 16" className="ml-[16px] w-[10px] h-[16px]"><path d="M0 1v14l7-7zM8 0h2v16H8z" fill="#b8b8b8" /></svg>
      <svg viewBox="0 0 18 18" className="ml-[18px] w-[18px] h-[18px]"><path d="M7.500 0h3v7.500H18v3h-7.500V18h-3v-7.500H0v-3h7.500z" fill="#333" /></svg>
      <div className="ml-[10px] w-[78px] h-full bg-white border-b-[3px] border-[#999] flex items-center justify-center">export(5)</div>
    </div>
  );
}

function Sidebar() {
  return (
    <div className="flex shrink-0">
      <div className="w-[6px] bg-white border-x border-t border-[#c8c8c8] flex flex-col">
        <div className="mt-[252px] h-[45px] w-full bg-[#9a9a9a] flex items-center justify-center">
          <div className="w-0 h-0 border-y-[4px] border-y-transparent border-l-[4px] border-l-white" />
        </div>
      </div>
      <div className="w-[41px] bg-[#f6f6f6] flex flex-col items-center">
        <G c="mt-[8px]">
          <path d="M12 1l2.500 3 3.500-1 1 3.500 3.500 1-1 3.500 2.500 1.500-2.500 2 1 3.500-3.500 1-1 3.500-3.500-1-2.500 2.500-2.500-2.500-3.500 1-1-3.500-3.500-1 1-3.500L0.500 12.500 3 11 2 7.500l3.500-1 1-3.500 3.500 1z" fill="#ddd" stroke="#aaa" />
          <circle cx="12" cy="12" r="5" fill="#f6f6f6" stroke="#999" strokeWidth="2" />
        </G>
        <div className="mt-[7px] w-[22px] h-px bg-[#ddd]" />
        <G c="mt-[7px]">
          <rect x="2" y="1" width="20" height="20" fill="#eee" stroke="#aaa" />
          <rect x="4" y="7" width="16" height="8" rx="4" fill="#3f8fe0" />
          <circle cx="16" cy="11" r="3" fill="#fff" />
        </G>
        <G c="mt-[10px]">
          <text x="0" y="19" fontSize="22" fontWeight="700" fill="#444" fontFamily="Liberation Sans">A</text>
          <path d="M24 6L15 18" stroke="#c58a3a" strokeWidth="2.500" />
          <path d="M16 18l-4 5 6-2z" fill="#d64fa0" />
        </G>
        <G c="mt-[12px]">
          <path d="M2 4l14-2 1 4H4l2 14-3 0z" fill="#ddd" stroke="#aaa" strokeWidth="0.600" />
          <rect x="4" y="5" width="19" height="16" fill="#fff" stroke="#888" />
          <rect x="6" y="7" width="15" height="6" fill="#3a8fd8" />
          <rect x="6" y="13" width="15" height="6" fill="#f2b84a" />
        </G>
        <div className="mt-[7px] w-[32px] h-[32px] rounded-[4px] border border-[#c8c8c8] flex items-center justify-center">
          <G>
            <circle cx="12" cy="12" r="11" fill="#999" />
            <circle cx="12" cy="12" r="8.500" fill="#3d4a66" />
            <path d="M18 6l-4 8-8 4 4-8z" fill="#eee" />
            <path d="M18 6l-8 4 4 4z" fill="#c9303a" />
          </G>
        </div>
        <div className="mt-[8px] h-[24px] flex items-center text-[#3d3d3d] font-['DejaVu_Sans',sans-serif] leading-none">
          <span className="text-[20px]">f</span>
          <span className="text-[10px] mt-[6px]">(x)</span>
        </div>
      </div>
    </div>
  );
}

function StatusBar() {
  const s = 'h-full shrink-0 border-r border-[#d8d8d8] flex items-center';
  return (
    <div className={`h-[21px] shrink-0 bg-[#f6f6f6] border-t border-[#c8c8c8] flex items-center text-[#3c3c3c] text-[11.8px] ${uiFont}`}>
      <div className={`${s} w-[185px] pl-[10px]`}>Sheet 1 of 1</div>
      <div className={`${s} w-[182px]`} />
      <div className={`${s} w-[167px] pl-[9px]`}>Default</div>
      <div className={`${s} w-[196px] justify-center`}>English (USA)</div>
      <div className={`${s} w-[69px]`} />
      <div className={`${s} w-[28px] pl-[8px]`}>
        <svg viewBox="0 0 16 14" className="w-4 h-[14px]">
          <path d="M1 1h6M1 13h6M4 1v12M10 12h5" stroke="#555" fill="none" />
        </svg>
      </div>
      <div className={`${s} w-[30px] justify-center`}>
        <svg viewBox="0 0 14 14" className="w-[14px] h-[14px]">
          <rect x="0.500" y="0.500" width="13" height="13" fill="#eee" stroke="#bbb" />
          <path d="M5 2h4v5h2.500L7 12 2.500 7H5z" fill="#ef8a1a" />
        </svg>
      </div>
      <div className={`${s} w-[29px]`} />
      <div className={`${s} w-[218px] justify-center`}>Average: ; Sum: 0</div>
      <div className={`${s} w-[143px]`}>
        <div className="ml-[9px] w-[10px] h-px bg-[#777]" />
        <div className="relative ml-[4px] w-[97px] h-[2px] bg-[#999]">
          <div className="absolute left-[42px] top-[-4px] w-[10px] h-[10px] rounded-full border border-[#888] bg-[#f6f6f6]" />
        </div>
        <div className="ml-[5px] w-[9px] h-[9px] bg-[linear-gradient(#777,#777),linear-gradient(#777,#777)] bg-no-repeat bg-center bg-[length:9px_1px,1px_9px]" />
      </div>
      <div className="pl-[7px]">100%</div>
    </div>
  );
}

export default function App() {
  return (
    <div className="relative w-[1366px] h-[768px] overflow-hidden flex flex-col">
      <TopBar />
      <div className="flex flex-1 min-h-0">
        <Dock />
        <div className="flex-1 min-w-0 flex flex-col">
          <TitleBar />
          <MenuBar />
          <div className="h-px mr-[36px] bg-[#dcdcdc] shrink-0 -mb-px z-10" />
          <Toolbar1 />
          <Toolbar2 />
          <div className="flex flex-1 min-h-0">
            <div className="flex-1 min-w-0 flex flex-col bg-[#f6f6f6]">
              <FormulaBar />
              <Sheet />
              <HScroll />
              <TabBar />
            </div>
            <Sidebar />
          </div>
          <StatusBar />
        </div>
      </div>
      <div className={`absolute left-[896px] top-[119px] w-[119px] h-[53px] rounded-[6px] bg-black p-[3px] ${uiFont}`}>
        <div className="w-full h-full rounded-[4px] border border-[#2e2e2e] flex items-center justify-center text-white text-[13.5px]">Insert Image</div>
      </div>
    </div>
  );
}
